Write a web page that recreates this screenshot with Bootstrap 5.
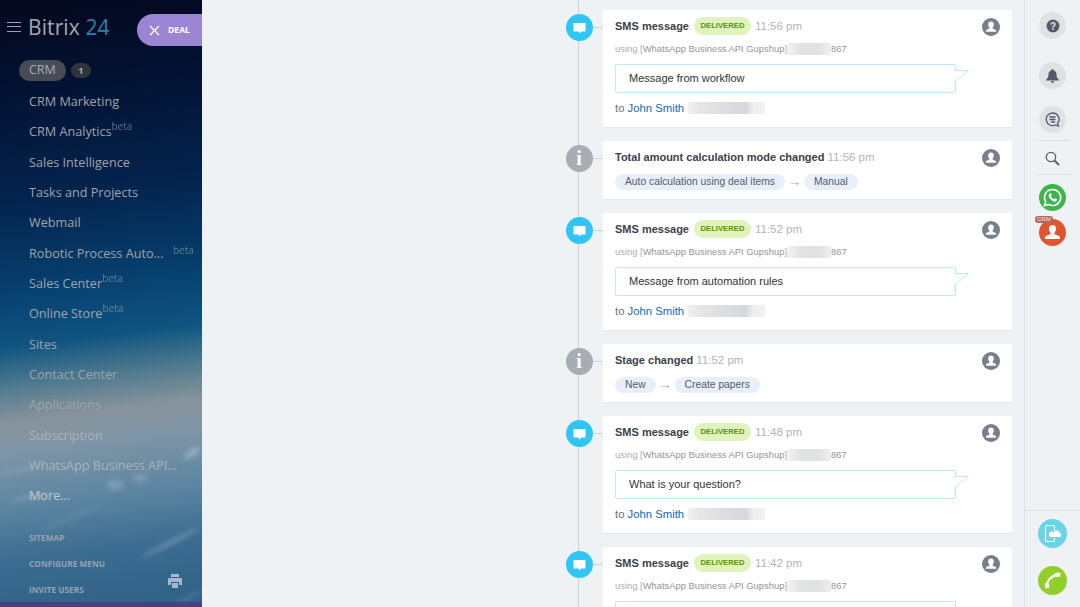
<!DOCTYPE html>
<html lang="en">
<head>
    <meta charset="UTF-8">
    <meta name="viewport" content="width=device-width, initial-scale=1.0">
    <title>Bitrix 24 - Deal</title>
    <link href="https://cdn.jsdelivr.net/npm/bootstrap@5.3.0/dist/css/bootstrap.min.css" rel="stylesheet">
    <style>
        html, body { height: 607px; overflow: hidden; }
        body { background: #eef2f4; font-family: "Liberation Sans", Arial, sans-serif; color: #333; }
        .page-wrap { height: 607px; }

        /* left menu */
        .side-menu {
            width: 202px; height: 607px; position: relative; overflow: hidden;
            font-family: "Open Sans", sans-serif; color: #a0a4a9;
            background: linear-gradient(173deg, #03071c 0, #031233 90px, #03234d 200px, #07406f 290px, #0f5480 345px, #4f7a8f 385px, #87939b 420px, #7e95a6 450px, #5f87a3 500px, #3b6b90 560px, #2f6288 620px);
        }
        .sky-clouds { position: absolute; left: 0; top: 0; }
        .side-head, .menu-list, .menu-links { position: relative; }
        .side-head { height: 54px; padding-left: 7px; }
        .burger { width: 14px; height: 10px; border-top: 1.5px solid #9ea4ab; border-bottom: 1.5px solid #9ea4ab; position: relative; margin-right: 7px; }
        .burger::after { content: ""; position: absolute; left: 0; right: 0; top: 3px; border-top: 1.5px solid #9ea4ab; }
        .logo-text { font-size: 21px; line-height: 1; color: #a4a8ad; letter-spacing: .1px; }
        .logo-text span { color: #2a83a8; }
        .deal-pill {
            position: absolute; left: 137px; top: 14px; width: 65px; height: 32px;
            background: #9b84d4; border-radius: 16px 0 0 16px; color: #fff;
            font-size: 8.6px; font-weight: 700; padding-left: 12px; gap: 8px;
        }
        .menu-list { padding-left: 29px; }
        .crm-row { height: 26px; margin-left: -10px; gap: 5px; margin-bottom: 3px; margin-top: 3px; }
        .crm-active { background: #474b53; color: #a9adb3; font-size: 12.5px; border-radius: 11px; height: 21px; line-height: 20px; padding: 0 10px; }
        .crm-count { background: #2f343d; color: #a9adb3; font-size: 9px; font-weight: 700; border-radius: 8px; width: 20px; height: 15px; line-height: 15px; text-align: center; }
        .menu-item { height: 30.33px; line-height: 30.33px; font-size: 12.65px; white-space: nowrap; }
        .menu-item:nth-child(n+13) { color: #adb3b8; }
        .menu-item:last-child { color: #c2c8cd; }
        .menu-item sup { font-size: 10px; top: -6px; line-height: 0; position: relative; vertical-align: baseline; opacity: .6; }
        .menu-item .beta-far { position: absolute; left: 173px; font-size: 10px; line-height: 24px; opacity: .6; }
        .menu-links { margin-top: 14px; padding-left: 29px; font-size: 8.3px; font-weight: 700; line-height: 26.3px; color: #93a3af; }
        .printer { position: absolute; left: 168px; top: 574px; }
        .purple-strip { position: absolute; left: 0; right: 0; bottom: 0; height: 5px; background: #4a3f80; }

        /* timeline */
        .feed-area { width: 822px; height: 607px; overflow: hidden; padding: 10px 12px 0 364px; position: relative; }
        .feed-line { position: absolute; left: 376px; top: 0; bottom: 0; width: 1px; background: #ccd3d8; }
        .feed-row { position: relative; margin-bottom: 13px; margin-left: 37px; }
        .feed-box { background: #fff; padding: 8px 12px 0 12px; border-bottom: 1px solid #e3e7ea; position: relative; }
        .feed-box.sms-box { height: 118px; }
        .feed-box.info-box { height: 59px; }
        .feed-dot { position: absolute; left: -37.5px; top: 3.5px; width: 27px; height: 27px; border-radius: 50%; }
        .feed-dot::after { content: ""; position: absolute; left: 27px; top: 13px; width: 11px; border-top: 1px solid #ccd3d8; }
        .dot-sms { background: #2fc6f6; }
        .dot-info { background: #a8adb4; color: #fff; font: 700 20px/27px "Liberation Serif", serif; text-align: center; }
        .feed-title { font-size: 11px; font-weight: 700; color: #3b4148; line-height: 16px; }
        .sms-box .feed-title { margin-top: -1px; }
        .feed-time { font-size: 11.5px; color: #b0b5bb; font-weight: 400; }
        .state-tag { background: #e1f3bd; color: #589309; font-size: 7.7px; font-weight: 700; border-radius: 9px; height: 18px; line-height: 18px; padding: 0 6.5px; margin: 0 4px 0 5px; }
        .using-line { font-size: 9.4px; color: #a8aeb5; line-height: 12px; margin-top: 8px; height: 12px; white-space: nowrap; }
        .using-line b { font-weight: 400; color: #8e959c; }
        .blur-num { display: inline-block; width: 44px; height: 12px; vertical-align: top; background: linear-gradient(90deg, #f4f4f5, #e2e3e5 30%, #e0e1e3 70%, #efeff0); }
        .msg-box { position: relative; width: 341px; height: 29px; margin-top: 9px; border: 1px solid #bfe9f8; border-radius: 2px; padding-left: 13px; font-size: 11px; line-height: 26px; color: #333; }
        .msg-tail { position: absolute; left: 338px; top: 4px; }
        .to-line { font-size: 11.3px; line-height: 14px; margin-top: 8px; color: #6a7178; }
        .to-line a { color: #2067b0; text-decoration: none; }
        .blur-name { display: inline-block; width: 77px; height: 12px; margin-left: 1px; vertical-align: -2px; background: linear-gradient(90deg, #f0f0f1, #e6e6e8 15%, #dcdde0 50%, #d6d7da 75%, #eeeeef 85%, #f2f2f3); }
        .author-ico { position: absolute; right: 12px; top: 8px; width: 18px; height: 18px; }
        .chip-row { margin-top: 9px; font-size: 10.3px; color: #535c69; }
        .flow-chip { background: #e8eff9; border-radius: 8px; height: 16px; line-height: 16px; padding: 0 10px; }
        .flow-arrow { color: #a8aeb5; margin: -3px 2.5px 0; font-size: 14px; line-height: 16px; }

        /* right panel */
        .right-panel { width: 56px; height: 607px; border-left: 1px solid #dde2e5; padding-top: 12px; position: relative; margin-left: auto; }
        .round-btn { width: 27px; height: 27px; border-radius: 50%; background: #dfe2e5; }
        .panel-sep { width: 36px; border-top: 1px solid #dde2e5; }
        .panel-bottom { position: absolute; left: 0; right: 0; top: 510px; border-top: 1px solid #dde2e5; padding-top: 8px; }
        .crm-mini { position: absolute; left: -4px; top: -3px; background: #b5695a; color: #f3e5e0; font-size: 6px; line-height: 7px; border-radius: 3px; padding: 0 2px; }
    </style>
</head>
<body>
<div class="page-wrap d-flex">
    <!-- left menu -->
    <div class="side-menu flex-shrink-0">
        <svg class="sky-clouds" width="202" height="607" viewBox="0 0 202 607">
            <defs><filter id="soft"><feGaussianBlur stdDeviation="2.5"/></filter></defs>
            <g fill="#dfe7ee" filter="url(#soft)">
                <ellipse cx="192" cy="453" rx="10" ry="4" opacity=".3" transform="rotate(-35 192 453)"/>
                <ellipse cx="20" cy="470" rx="22" ry="2" opacity=".15" transform="rotate(-12 20 470)"/>
                <ellipse cx="115" cy="485" rx="8" ry="5" opacity=".22"/>
                <ellipse cx="140" cy="478" rx="7" ry="3" opacity=".25"/>
                <ellipse cx="30" cy="497" rx="22" ry="2" opacity=".18" transform="rotate(-10 30 497)"/>
                <ellipse cx="70" cy="518" rx="35" ry="2" opacity=".12" transform="rotate(-22 70 518)"/>
                <ellipse cx="170" cy="543" rx="32" ry="2.500" opacity=".25" transform="rotate(-27 170 543)"/>
                <ellipse cx="190" cy="597" rx="16" ry="2" opacity=".15" transform="rotate(-25 190 597)"/>
            </g>
        </svg>
        <div class="side-head d-flex align-items-center">
            <div class="burger"></div>
            <div class="logo-text">Bitrix <span>24</span></div>
        </div>
        <div class="deal-pill d-flex align-items-center">
            <svg width="11" height="11" viewBox="0 0 11 11"><path d="M1 1l9 9M10 1l-9 9" stroke="#fff" stroke-width="1.3"/></svg>
            <span>DEAL</span>
        </div>
        <div class="menu-list">
            <div class="crm-row d-flex align-items-center">
                <div class="crm-active">CRM</div>
                <div class="crm-count">1</div>
            </div>
            <div class="menu-item">CRM Marketing</div>
            <div class="menu-item">CRM Analytics<sup>beta</sup></div>
            <div class="menu-item">Sales Intelligence</div>
            <div class="menu-item">Tasks and Projects</div>
            <div class="menu-item">Webmail</div>
            <div class="menu-item">Robotic Process Auto...<span class="beta-far">beta</span></div>
            <div class="menu-item">Sales Center<sup>beta</sup></div>
            <div class="menu-item">Online Store<sup>beta</sup></div>
            <div class="menu-item">Sites</div>
            <div class="menu-item">Contact Center</div>
            <div class="menu-item">Applications</div>
            <div class="menu-item">Subscription</div>
            <div class="menu-item">WhatsApp Business API...</div>
            <div class="menu-item">More...</div>
        </div>
        <div class="menu-links">
            <div>SITEMAP</div>
            <div>CONFIGURE MENU</div>
            <div>INVITE USERS</div>
        </div>
        <svg class="printer" width="14" height="15" viewBox="0 0 14 15"><path d="M3 0h8v3H3zM1 4h12a1 1 0 0 1 1 1v6h-3V8H3v3H0V5a1 1 0 0 1 1-1zM4 9h6v5H4z" fill="rgba(255,255,255,.55)"/></svg>
        <div class="purple-strip"></div>
    </div>

    <!-- feed -->
    <div class="feed-area flex-shrink-0" id="feed">
        <div class="feed-line"></div>
    </div>

    <!-- right panel -->
    <div class="right-panel flex-shrink-0 d-flex flex-column align-items-center">
        <div class="round-btn d-flex align-items-center justify-content-center">
            <svg width="14" height="14" viewBox="0 0 14 14"><circle cx="7" cy="7" r="6.5" fill="#525c69"/><text x="7" y="10.5" text-anchor="middle" font-size="10" font-weight="700" fill="#dfe2e5" font-family="Liberation Sans">?</text></svg>
        </div>
        <div class="round-btn d-flex align-items-center justify-content-center" style="margin-top:23px">
            <svg width="13" height="14" viewBox="0 0 13 14"><path d="M6.5 0a1 1 0 0 1 1 1.2C9.8 1.8 10.6 4 10.6 6c0 2.500.8 3.500 2.400 4.800v.7H0v-.7C1.600 9.500 2.400 8.500 2.400 6c0-2 .8-4.200 3.100-4.800a1 1 0 0 1 1-1.200zM4.800 12.300h3.400a1.700 1.700 0 0 1-3.400 0z" fill="#525c69"/></svg>
        </div>
        <div class="round-btn d-flex align-items-center justify-content-center" style="margin-top:17px">
            <svg width="15" height="15" viewBox="0 0 15 15" fill="none" stroke="#525c69" stroke-width="1.300"><path d="M7.500 1a6.300 6.300 0 1 0 2.700 12l3.300 1-1-2.600A6.300 6.300 0 0 0 7.500 1z"/><path d="M4.500 5h6M4.500 7.500h6M6 10h4"/></svg>
        </div>
        <div class="panel-sep" style="margin-top:7px"></div>
        <svg style="margin-top:10px" width="15" height="15" viewBox="0 0 15 15" fill="none" stroke="#525c69"><circle cx="6" cy="6" r="4.700" stroke-width="1.300"/><path d="M9.500 9.500l4.500 4.500" stroke-width="1.800"/></svg>
        <div class="panel-sep" style="margin-top:8px"></div>
        <div class="round-btn d-flex align-items-center justify-content-center" style="margin-top:9px;background:#3cb54a">
            <svg width="19" height="19" viewBox="0 0 19 19"><path d="M9.500 1.500a8 8 0 0 0-6.900 12L1.500 17.500l4.100-1.100a8 8 0 1 0 3.900-14.900z" fill="none" stroke="#fff" stroke-width="1.600"/><path d="M6.800 5.500c-.7.300-1.300 1.200-1.100 2.500.3 2 3 5.100 5.600 5.500 1.300.2 2.200-.5 2.500-1.300l.1-1-2-1-.9 1c-1.200-.4-2.500-1.700-3-3l.9-.9-.9-2.100z" fill="#fff"/></svg>
        </div>
        <div class="round-btn position-relative d-flex align-items-center justify-content-center" style="margin-top:8px;background:#e3552f">
            <svg width="17" height="17" viewBox="0 0 17 17"><path d="M8.500 1C6.200 1 5 2.600 5 4.800c0 1.500.6 3 1.500 3.900v1.500C4.800 11 1.500 11.500 1 13.500V15h15v-1.500c-.5-2-3.800-2.500-5.500-3.300V8.700c.9-.9 1.500-2.400 1.500-3.900C12 2.600 10.800 1 8.500 1z" fill="#fff"/></svg>
            <span class="crm-mini">CRM</span>
        </div>
        <div class="panel-bottom d-flex flex-column align-items-center">
            <div class="round-btn d-flex align-items-center justify-content-center" style="width:29px;height:29px;background:#6bd4e6">
                <svg width="19" height="19" viewBox="0 0 19 19"><rect x="2.500" y="1.500" width="9" height="16" rx="1.500" fill="none" stroke="#fff" stroke-width="1.200"/><path d="M7 13.500h9.500a2.500 2.500 0 0 0 .5-4.900 3.200 3.200 0 0 0-6-1 2.900 2.900 0 0 0-4 5.900z" fill="#fff" stroke="#6bd4e6" stroke-width="1"/></svg>
            </div>
            <div class="round-btn d-flex align-items-center justify-content-center" style="width:29px;height:29px;background:#93cf2a;margin-top:18px">
                <svg width="19" height="19" viewBox="0 0 19 19"><path d="M3.500 15.500C4 10 8 5 14.500 3.500" fill="none" stroke="#fff" stroke-width="2.400"/><path d="M11.500 2.500l4.800-.9c.6 0 1 .4 1 1v2.200c0 .5-.5.9-1 .9l-3.600.3zM2 12.300l.1 4c0 .6.500 1 1.100 1l2.400-.2c.5 0 .8-.5.7-1l-.5-3.700z" fill="#fff"/></svg>
            </div>
        </div>
    </div>
</div>

<template id="author-tpl">
    <svg class="author-ico" viewBox="0 0 18 18"><circle cx="9" cy="9" r="9" fill="#767f8b"/><path d="M9 3.500c-1.800 0-2.800 1.300-2.800 3 0 1.200.5 2.300 1.200 3v1C6 11.200 4.200 11.500 3.800 13v.8h10.400V13c-.4-1.500-2.200-1.800-3.600-2.500v-1c.7-.7 1.200-1.800 1.200-3 0-1.700-1-3-2.800-3z" fill="#fff"/></svg>
</template>

<script>
    // timeline entries from top to bottom
    const items = [
        { type: 'sms', time: '11:56 pm', text: 'Message from workflow' },
        { type: 'info', title: 'Total amount calculation mode changed', time: '11:56 pm', from: 'Auto calculation using deal items', to: 'Manual' },
        { type: 'sms', time: '11:52 pm', text: 'Message from automation rules' },
        { type: 'info', title: 'Stage changed', time: '11:52 pm', from: 'New', to: 'Create papers' },
        { type: 'sms', time: '11:48 pm', text: 'What is your question?' },
        { type: 'sms', time: '11:42 pm', text: '' }
    ];
    const author = document.getElementById('author-tpl').innerHTML;
    const bubbleIcon = '<svg width="27" height="27" viewBox="0 0 27 27"><path d="M7.500 9h12v8.500h-4.300l-1.700 2-1.200-2H7.500z" fill="#fff"/></svg>';
    const tail = '<svg class="msg-tail" width="16" height="20" viewBox="0 0 16 20"><path d="M1 0v1.500h13.500L1 12.500v14" fill="#fff" stroke="#bfe9f8"/></svg>';

    document.getElementById('feed').insertAdjacentHTML('beforeend', items.map(item => {
        if (item.type === 'sms') {
            // the last row is cut off by the window, only its top part is drawn
            const toLine = item.text ? '<div class="to-line">to <a href="#">John Smith</a> <span class="blur-name"></span></div>' : '';
            return `<div class="feed-row">
                <div class="feed-dot dot-sms">${bubbleIcon}</div>
                <div class="feed-box sms-box">
                    <div class="feed-title d-flex align-items-center">SMS message<span class="state-tag">DELIVERED</span><span class="feed-time">${item.time}</span></div>
                    <div class="using-line">using [<b>WhatsApp Business API Gupshup</b>]<span class="blur-num"></span><b>867</b></div>
                    <div class="msg-box">${item.text}${tail}</div>
                    ${toLine}
                    ${author}
                </div>
            </div>`;
        }
        return `<div class="feed-row">
            <div class="feed-dot dot-info">i</div>
            <div class="feed-box info-box">
                <div class="feed-title">${item.title} <span class="feed-time">${item.time}</span></div>
                <div class="chip-row d-flex align-items-center"><span class="flow-chip">${item.from}</span><span class="flow-arrow">→</span><span class="flow-chip">${item.to}</span></div>
                ${author}
            </div>
        </div>`;
    }).join(''));
</script>
<script src="https://cdn.jsdelivr.net/npm/bootstrap@5.3.0/dist/js/bootstrap.bundle.min.js"></script>
</body>
</html>
